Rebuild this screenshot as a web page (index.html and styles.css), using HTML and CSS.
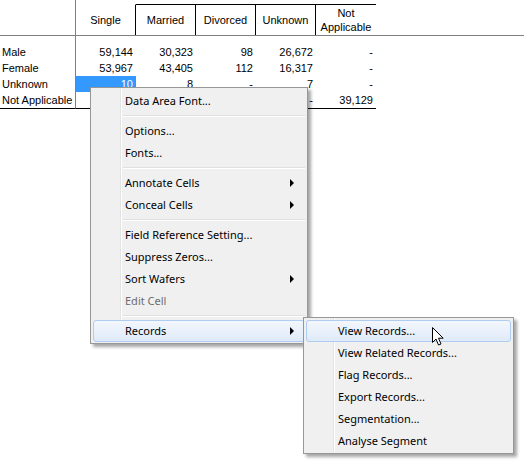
FILE: index.html
```
<!DOCTYPE html>
<html>
<head>
    <title>Wafer</title>
    <link rel="stylesheet" href="styles.css">
</head>
<body>
    <table class="wafer">
        <colgroup>
            <col class="c-label">
            <col class="c-num"><col class="c-num"><col class="c-num"><col class="c-num"><col class="c-num">
            <col>
        </colgroup>
        <thead>
            <tr>
                <th class="corner"></th>
                <th><div class="hbox no-top">Single</div></th>
                <th><div class="hbox">Married</div></th>
                <th><div class="hbox">Divorced</div></th>
                <th><div class="hbox">Unknown</div></th>
                <th><div class="hbox no-right">Not<br>Applicable</div></th>
                <th class="rest"></th>
            </tr>
        </thead>
        <tbody>
            <tr class="gap"><td class="label"></td><td colspan="6"></td></tr>
            <tr>
                <td class="label">Male</td>
                <td>59,144</td><td>30,323</td><td>98</td><td>26,672</td><td>-</td><td class="rest"></td>
            </tr>
            <tr>
                <td class="label">Female</td>
                <td>53,967</td><td>43,405</td><td>112</td><td>16,317</td><td>-</td><td class="rest"></td>
            </tr>
            <tr>
                <td class="label">Unknown</td>
                <td class="selected">10</td><td>8</td><td>-</td><td>7</td><td>-</td><td class="rest"></td>
            </tr>
            <!-- cells under the context menu are left empty -->
            <tr class="last">
                <td class="label">Not Applicable</td>
                <td></td><td></td><td></td><td>-</td><td>39,129</td><td class="rest"></td>
            </tr>
        </tbody>
    </table>

    <div class="menu main-menu">
        <div class="item">Data Area Font...</div>
        <div class="sep"></div>
        <div class="item">Options...</div>
        <div class="item">Fonts...</div>
        <div class="sep"></div>
        <div class="item sub">Annotate Cells</div>
        <div class="item sub">Conceal Cells</div>
        <div class="sep"></div>
        <div class="item">Field Reference Setting...</div>
        <div class="item">Suppress Zeros...</div>
        <div class="item sub">Sort Wafers</div>
        <div class="item disabled">Edit Cell</div>
        <div class="sep"></div>
        <div class="item sub hot">Records</div>
    </div>

    <div class="menu sub-menu">
        <div class="item hot">View Records...</div>
        <div class="item">View Related Records...</div>
        <div class="item">Flag Records...</div>
        <div class="item">Export Records...</div>
        <div class="item">Segmentation...</div>
        <div class="item">Analyse Segment</div>
    </div>

    <svg class="cursor" width="13" height="20" viewBox="0 0 13 20">
        <path d="M0.5 0.5 L0.5 15.5 L4 12 L6.5 18 L9 17 L6.5 11.2 L11.2 11.2 Z" fill="#fff" stroke="#000" stroke-width="1" stroke-linejoin="miter"/>
    </svg>
</body>
</html>
```

FILE: styles.css
```
body {
    margin: 0;
    padding: 0;
    background-color: #fff;
    width: 524px;
    height: 465px;
    overflow: hidden;
    position: relative;
}
.wafer {
    font-family: "Liberation Sans", Arial, sans-serif;
    font-size: 11px;
    color: #000;
    border-collapse: separate;
    border-spacing: 0;
    table-layout: fixed;
    width: 524px;
}
.c-label {
    width: 76px;
}
.c-num {
    width: 60px;
}
.wafer th {
    padding: 0;
    height: 36px;
    box-sizing: border-box;
    border-bottom: 1px solid #808080;
    font-weight: normal;
    vertical-align: top;
}
.wafer th.corner {
    border-right: 1px solid #808080;
}
.hbox {
    margin-top: 4px;
    height: 31px;
    box-sizing: border-box;
    border-top: 1px solid #000;
    border-right: 1px solid #000;
    display: flex;
    align-items: center;
    justify-content: center;
    text-align: center;
    line-height: 14px;
}
.hbox.no-top {
    border-top-color: transparent;
}
.hbox.no-right {
    border-right: none;
}
.wafer td {
    padding: 0 3px 0 0;
    height: 16px;
    line-height: 16px;
    text-align: right;
    white-space: nowrap;
}
.wafer td.label {
    text-align: left;
    padding: 0 0 0 2px;
    border-right: 1px solid #808080;
}
.wafer tr.gap td {
    height: 8px;
    line-height: 8px;
}
.wafer tr.last td {
    border-bottom: 1px solid #000;
    height: 16px;
    box-sizing: border-box;
}
.wafer tr.last td.rest {
    border-bottom: none;
}
.wafer td.selected {
    background-color: #3399ff;
    color: #fff;
}

.menu {
    position: absolute;
    font-family: "Noto Sans", "Open Sans", sans-serif;
    font-size: 11px;
    color: #000;
    background-color: #f0f0f0;
    border: 1px solid #979797;
    box-sizing: border-box;
    padding: 2px 2px 1px 2px;
    box-shadow: 3px 3px 3px rgba(0, 0, 0, 0.35);
    background-image: linear-gradient(#e2e3e3, #e2e3e3), linear-gradient(#fff, #fff);
    background-size: 1px 100%, 1px 100%;
    background-position: 29px 0, 30px 0;
    background-repeat: no-repeat;
}
.main-menu {
    left: 90px;
    top: 87px;
    width: 218px;
    height: 257px;
}
.sub-menu {
    left: 303px;
    top: 317px;
    width: 211px;
    height: 137px;
}
.item {
    position: relative;
    height: 22px;
    line-height: 22px;
    padding-left: 32px;
    box-sizing: border-box;
    white-space: nowrap;
}
.item.disabled {
    color: #6d6d6d;
}
.item.hot {
    border: 1px solid #aecdf1;
    border-radius: 3px;
    background: linear-gradient(#f3f7fd, #dfeaf8);
    line-height: 20px;
    padding-left: 31px;
}
.item.sub::after {
    content: "";
    position: absolute;
    right: 11px;
    top: 7px;
    border-left: 4px solid #000;
    border-top: 4px solid transparent;
    border-bottom: 4px solid transparent;
}
.item.hot.sub::after {
    right: 10px;
    top: 6px;
}
.sep {
    height: 8px;
    margin-left: 30px;
    background-image: linear-gradient(#e0e0e0, #e0e0e0), linear-gradient(#fff, #fff);
    background-size: 100% 1px, 100% 1px;
    background-position: 0 3px, 0 4px;
    background-repeat: no-repeat;
}
.cursor {
    position: absolute;
    left: 432px;
    top: 327px;
}
```
